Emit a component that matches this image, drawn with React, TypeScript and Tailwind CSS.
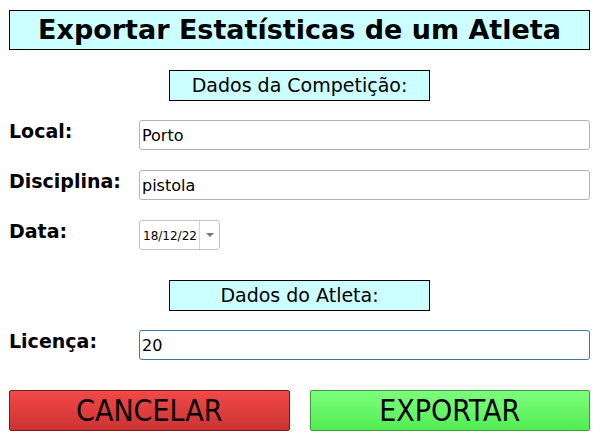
import React from "react";

const font = { fontFamily: '"DejaVu Sans", sans-serif' };

function Row({ label, children }: { label: string; children: React.ReactNode }) {
  return (
    <div className="flex items-start">
      <div className="w-[130px] shrink-0 text-[19px] font-bold leading-[22px] text-black">{label}</div>
      {children}
    </div>
  );
}

function TextInput({ value, focused }: { value: string; focused?: boolean }) {
  return (
    <div
      className={
        "flex h-[30px] flex-1 items-center rounded-[3px] border bg-white px-[2px] pt-[2px] text-[16px] text-black " +
        (focused ? "border-[#3b78a8]" : "border-[#b4b4b4]")
      }
    >
      {value}
    </div>
  );
}

export default function App() {
  return (
    <div className="flex w-[608px] h-[447px] flex-col bg-white px-[9px] pt-[10px]" style={font}>
      <div className="flex h-[40px] w-[581px] items-center justify-center border border-black bg-[#ccffff] text-[27px] font-bold text-black">
        Exportar Estatísticas de um Atleta
      </div>

      <div className="mt-[20px] flex w-[581px] justify-center">
        <div className="flex h-[31px] w-[261px] items-center justify-center border border-black bg-[#ccffff] text-[19px] text-black">
          Dados da Competição:
        </div>
      </div>

      <div className="mt-[19px] flex w-[581px] flex-col gap-[20px]">
        <Row label="Local:">
          <TextInput value="Porto" />
        </Row>
        <Row label="Disciplina:">
          <TextInput value="pistola" />
        </Row>
        <Row label="Data:">
          <div className="flex h-[30px] w-[81px] items-stretch rounded-[3px] border border-[#c4c4c4] bg-white">
            <div className="flex flex-1 items-center pl-[3px] pt-[1px] text-[12px] text-black">18/12/22</div>
            <div className="flex w-[20px] items-center justify-center border-l border-[#d4d4d4]">
              <svg width="8" height="4" viewBox="0 0 8 4">
                <path d="M0 0 L8 0 L4 4 Z" fill="#777" />
              </svg>
            </div>
          </div>
        </Row>
      </div>

      <div className="mt-[30px] flex w-[581px] justify-center">
        <div className="flex h-[31px] w-[261px] items-center justify-center border border-black bg-[#ccffff] text-[19px] text-black">
          Dados do Atleta:
        </div>
      </div>

      <div className="mt-[19px] flex w-[581px] flex-col">
        <Row label="Licença:">
          <TextInput value="20" focused />
        </Row>
      </div>

      <div className="mt-[30px] flex w-[581px] gap-[20px]">
        <button
          className="flex h-[41px] w-[281px] items-center justify-center rounded-[2px] border border-[#7a1a1a] bg-gradient-to-b from-[#f24848] to-[#cc3333] text-[30px] leading-none text-black"
          style={{ fontFamily: '"DejaVu Sans Condensed", "DejaVu Sans", sans-serif', fontStretch: "condensed" }}
        >
          CANCELAR
        </button>
        <button
          className="flex h-[41px] w-[281px] items-center justify-center rounded-[2px] border border-[#3c9a3c] bg-gradient-to-b from-[#7cff7c] to-[#52ec52] text-[30px] leading-none text-black"
          style={{ fontFamily: '"DejaVu Sans Condensed", "DejaVu Sans", sans-serif', fontStretch: "condensed" }}
        >
          EXPORTAR
        </button>
      </div>
    </div>
  );
}
